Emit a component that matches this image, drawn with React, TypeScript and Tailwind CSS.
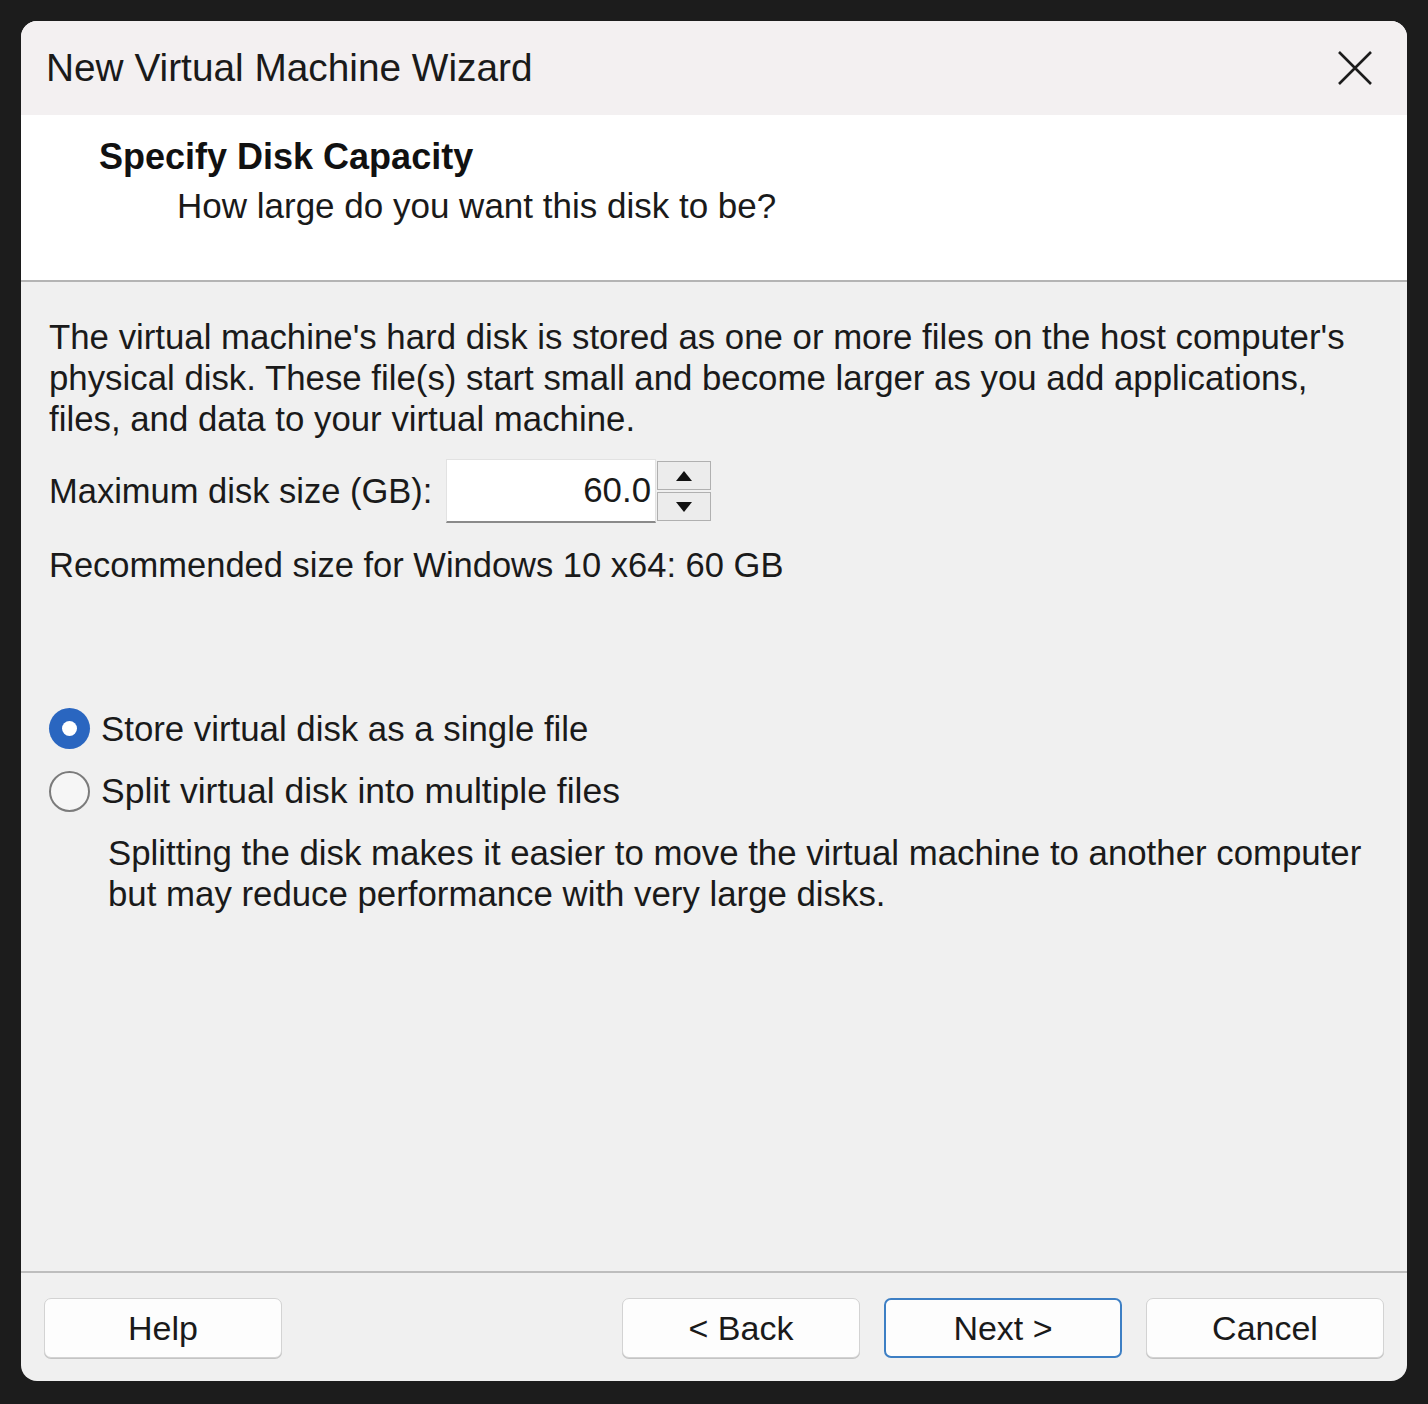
import React, { useState } from 'react';

const font = { fontFamily: '"Liberation Sans", Arial, sans-serif' };

const WizardButton: React.FC<{ label: string; primary?: boolean }> = ({ label, primary }) => (
    <button
        className={`w-[238px] h-[60px] rounded-[7px] bg-[#fdfdfd] text-[34px] text-[#1a1a1a] leading-none flex items-center justify-center
            ${primary ? 'border-2 border-[#3d7fc4]' : 'border border-[#d3d3d3] shadow-[0_1px_0_#c4c4c4]'}`}
    >
        {label}
    </button>
);

const Radio: React.FC<{ checked: boolean; label: string; size: string; onClick: () => void }> = ({ checked, label, size, onClick }) => (
    <div className="flex items-center h-[63px] cursor-default" onClick={onClick}>
        {checked ? (
            <span className="w-[41px] h-[41px] rounded-full bg-[#2a66c0] flex items-center justify-center">
                <span className="w-[15px] h-[15px] rounded-full bg-white" />
            </span>
        ) : (
            <span className="w-[41px] h-[41px] rounded-full border-2 border-[#7b7b7b] bg-[#f6f6f6]" />
        )}
        <span className={`ml-[11px] leading-[41px] text-[#1a1a1a] ${size}`}>{label}</span>
    </div>
);

export default function App() {
    const [single, setSingle] = useState(true);

    return (
        <div className="w-[1428px] h-[1404px] bg-[#1c1c1c] pt-[21px] pl-[21px] pr-[21px] pb-[23px]" style={font}>
            <div className="w-[1386px] h-[1360px] rounded-[16px] overflow-hidden flex flex-col bg-[#f0f0f0]">
                {/* Title bar */}
                <div className="h-[94px] bg-[#f3f0f1] flex items-center justify-between pl-[25px] pr-[34px]">
                    <span className="text-[38.8px] text-[#1a1a1a] leading-none">New Virtual Machine Wizard</span>
                    <svg width="36" height="36" viewBox="0 0 36 36">
                        <path d="M2 2 L34 34 M34 2 L2 34" stroke="#1c1c1c" strokeWidth="2.6" fill="none" />
                    </svg>
                </div>

                {/* Header */}
                <div className="h-[167px] bg-white border-b-2 border-[#b4b4b4] pt-[18px]">
                    <div className="pl-[78px] text-[36px] font-bold leading-[48px] text-[#111]">Specify Disk Capacity</div>
                    <div className="pl-[156px] text-[35px] leading-[50px] text-[#1a1a1a]">How large do you want this disk to be?</div>
                </div>

                {/* Body */}
                <div className="flex-1 pl-[28px] pr-[20px] pt-[34px] text-[#1a1a1a] text-[34.8px] whitespace-nowrap">
                    <p className="leading-[41px]">
                        The virtual machine's hard disk is stored as one or more files on the host computer's
                        <br />
                        physical disk. These file(s) start small and become larger as you add applications,
                        <br />
                        files, and data to your virtual machine.
                    </p>

                    <div className="flex items-center mt-[20px] h-[64px]">
                        <span className="leading-[41px] w-[397px] text-[34.5px]">Maximum disk size (GB):</span>
                        <div className="flex h-[64px]">
                            <div className="w-[210px] h-[64px] bg-white border border-[#e2e2e2] border-b-2 border-b-[#8a8a8a] flex items-center justify-end pr-[4px] leading-none">
                                60.0
                            </div>
                            <div className="flex flex-col gap-[2px] pt-[2px] pl-[1px] w-[56px]">
                                <button className="h-[29px] w-[54px] bg-[#ececec] border border-[#b0b0b0] flex items-center justify-center">
                                    <svg width="18" height="12" viewBox="0 0 18 12"><path d="M9 1 L17 11 L1 11 Z" fill="#111" /></svg>
                                </button>
                                <button className="h-[29px] w-[54px] bg-[#ececec] border border-[#b0b0b0] flex items-center justify-center">
                                    <svg width="18" height="12" viewBox="0 0 18 12"><path d="M1 1 L17 1 L9 11 Z" fill="#111" /></svg>
                                </button>
                            </div>
                        </div>
                    </div>

                    <div className="mt-[22px] leading-[41px] text-[34.5px]">Recommended size for Windows 10 x64: 60 GB</div>

                    <div className="mt-[111px]">
                        <Radio checked={single} size="text-[34.8px]" label="Store virtual disk as a single file" onClick={() => setSingle(true)} />
                        <Radio checked={!single} size="text-[35.5px]" label="Split virtual disk into multiple files" onClick={() => setSingle(false)} />
                    </div>

                    <p className="pl-[59px] mt-[9px] leading-[41px] text-[34.8px]">
                        Splitting the disk makes it easier to move the virtual machine to another computer
                        <br />
                        but may reduce performance with very large disks.
                    </p>
                </div>

                {/* Footer */}
                <div className="h-[110px] border-t-2 border-[#bdbdbd] flex pt-[25px] pl-[23px] pr-[23px]">
                    <WizardButton label="Help" />
                    <div className="flex-1" />
                    <div className="flex gap-[24px]">
                        <WizardButton label="< Back" />
                        <WizardButton label="Next >" primary />
                        <WizardButton label="Cancel" />
                    </div>
                </div>
            </div>
        </div>
    );
}
